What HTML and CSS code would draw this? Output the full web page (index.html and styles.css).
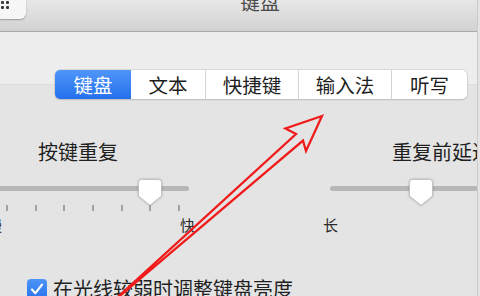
FILE: index.html
```html
<!DOCTYPE html>
<html lang="zh-CN">
<head>
<meta charset="utf-8">
<title>键盘</title>
<link rel="stylesheet" href="styles.css">
</head>
<body>
<div class="window">
  <header class="titlebar">
    <div class="showall">
      <span class="dot"></span><span class="dot"></span>
      <span class="dot"></span><span class="dot"></span>
    </div>
    <div class="title">键盘</div>
  </header>
  <main class="pane">
    <nav class="tabs">
      <span class="seg seg-sel w76">键盘</span>
      <span class="seg w75">文本</span>
      <span class="seg w93">快捷键</span>
      <span class="seg w93">输入法</span>
      <span class="seg w75 last">听写</span>
    </nav>
    <section class="sliders">
      <div class="group g1">
        <div class="label">按键重复</div>
        <div class="slider">
          <div class="track"></div>
          <svg class="thumb t1" width="24" height="27" viewBox="0 0 24 27"><path d="M3.5 0.5H20.5a3 3 0 0 1 3 3V17L12 26.3L0.5 17V3.5a3 3 0 0 1 3-3Z" fill="#fff" stroke="#bdbdbd" stroke-width="0.8"/></svg>
          <div class="ticks">
            <i></i><i></i><i></i><i></i><i></i><i></i><i></i>
          </div>
        </div>
        <div class="ends"><span>慢</span><span>快</span></div>
      </div>
      <div class="group g2">
        <div class="label">重复前延迟</div>
        <div class="slider">
          <div class="track"></div>
          <svg class="thumb t2" width="24" height="27" viewBox="0 0 24 27"><path d="M3.5 0.5H20.5a3 3 0 0 1 3 3V17L12 26.3L0.5 17V3.5a3 3 0 0 1 3-3Z" fill="#fff" stroke="#bdbdbd" stroke-width="0.8"/></svg>
          <div class="ticks">
            <i></i><i></i><i></i><i></i><i></i><i></i>
          </div>
        </div>
        <div class="ends"><span>长</span><span>短</span></div>
      </div>
    </section>
    <label class="check">
      <span class="box"><svg width="20" height="20" viewBox="0 0 20 20"><path d="M5 10.5L8.4 14.2L15 5.6" fill="none" stroke="#fff" stroke-width="2.2" stroke-linecap="round" stroke-linejoin="round"/></svg></span>
      <span class="check-text">在光线较弱时调整键盘亮度</span>
    </label>
  </main>
  <svg class="arrow" width="480" height="296" viewBox="0 0 480 296">
    <path d="M322 116L285.5 128.5L296 134L108 306L303 140.5L306 151Z" fill="none" stroke="#f01c1c" stroke-width="2.3" stroke-linejoin="miter"/>
  </svg>
</div>
</body>
</html>
```
FILE: styles.css
```css
* { box-sizing: border-box; }
html, body {
  margin: 0;
  padding: 0;
  width: 480px;
  height: 296px;
  overflow: hidden;
  background: #e4e4e4;
  font-family: "Noto Sans CJK SC", "Noto Sans", sans-serif;
  color: #222;
}
.window {
  position: relative;
  width: 478px;
  height: 296px;
  border-right: 1px solid #cacaca;
  overflow: hidden;
  display: flex;
  flex-direction: column;
}
.titlebar {
  height: 32px;
  flex: none;
  display: flex;
  align-items: flex-start;
  background: linear-gradient(#e7e7e7, #d2d2d2);
  border-bottom: 1px solid #a9a9a9;
}
.showall {
  width: 26px;
  height: 19px;
  background: #f6f6f6;
  border-radius: 0 0 6px 0;
  box-shadow: 0 0.5px 1.5px rgba(0,0,0,0.3);
  display: grid;
  grid-template-columns: 3px 3px;
  grid-template-rows: 3px 3px;
  gap: 2px 2.5px;
  padding: 1px 0 0 0.5px;
  align-content: start;
}
.dot { background: #3a3a3a; border-radius: 1px; }
.title {
  margin: -10px 0 0 214px;
  font-size: 20px;
  line-height: 24px;
  color: #4a4a4a;
}
.pane {
  flex: 1;
  background: linear-gradient(#ededed 0, #ededed 52px, #dddddd 52px, #dddddd 53px, #e4e4e4 53px);
  display: flex;
  flex-direction: column;
}
.tabs {
  margin: 38px 0 0 55px;
  width: 412px;
  height: 29px;
  display: flex;
  background: #fff;
  border-radius: 5px;
  box-shadow: 0 0 0 0.5px #c4c4c4, 0 1px 1.5px rgba(0,0,0,0.18);
}
.seg {
  display: flex;
  align-items: center;
  justify-content: center;
  font-size: 19.5px;
  line-height: 29px;
  color: #1e1e1e;
  border-right: 1px solid #d4d4d4;
}
.seg.last { border-right: none; }
.seg-sel {
  color: #fff;
  background: linear-gradient(#4f96fa, #2570eb);
  border-radius: 5px 0 0 5px;
  border-right: none;
}
.w76 { width: 76px; }
.w75 { width: 75px; }
.w93 { width: 93px; }
.sliders {
  margin-top: 39px;
  display: flex;
}
.group { flex: none; }
.g1 { width: 192px; margin-left: -3px; }
.g2 { width: 210px; margin-left: 141px; }
.label {
  font-size: 20px;
  line-height: 28px;
  white-space: nowrap;
  color: #1f1f1f;
}
.g1 .label { padding-left: 41px; }
.g2 .label { padding-left: 62px; }
.slider {
  position: relative;
  padding-top: 20px;
  height: 44px;
}
.track {
  height: 5px;
  border-radius: 3px;
  background: #b7b7b7;
}
.thumb {
  position: absolute;
  top: 13px;
  filter: drop-shadow(0 0.5px 1px rgba(0,0,0,0.28));
}
.t1 { left: 141px; }
.t2 { left: 79px; }
.ticks {
  margin-top: 14px;
  height: 6px;
  display: flex;
  justify-content: space-between;
  padding: 0 9px;
}
.g2 .ticks { width: 170px; padding: 0 0 0 10px; justify-content: flex-start; gap: 38px; }
.ticks i {
  display: block;
  width: 2px;
  height: 6px;
  background: #a3a3a3;
}
.ends {
  margin-top: 5px;
  display: flex;
  justify-content: space-between;
  font-size: 15px;
  line-height: 20px;
  color: #2a2a2a;
}
.g1 .ends { margin: 5px -6px 0 -10px; }
.g2 .ends { margin: 5px 0 0 -7px; width: 400px; }
.check {
  margin: 40px 0 0 27px;
  display: flex;
  align-items: center;
  gap: 6px;
  height: 28px;
}
.box {
  width: 20px;
  height: 20px;
  border-radius: 4px;
  background: linear-gradient(#4d94f9, #2a73ec);
  display: block;
}
.box svg { display: block; }
.check-text {
  font-size: 20px;
  line-height: 28px;
  white-space: nowrap;
  color: #1f1f1f;
}
.arrow {
  position: absolute;
  left: 0;
  top: 0;
  pointer-events: none;
}
```
